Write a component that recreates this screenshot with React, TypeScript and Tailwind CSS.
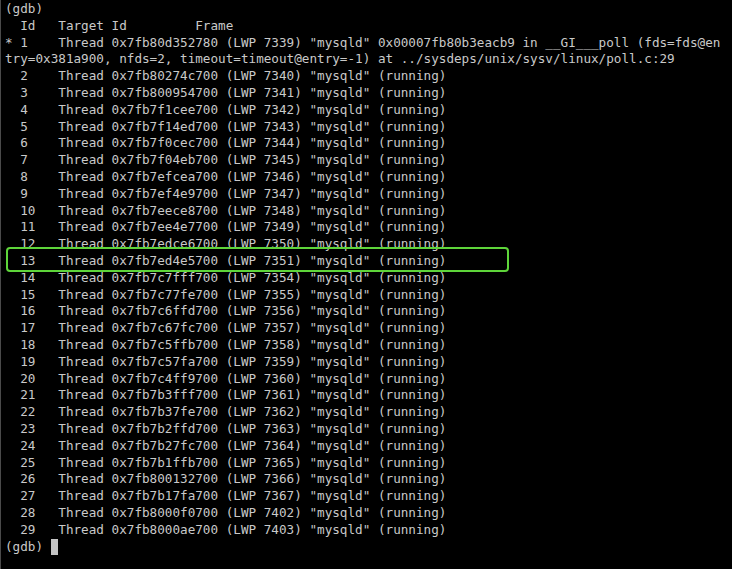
const threads: [number, string, number][] = [
  [2, "0x7fb80274c700", 7340],
  [3, "0x7fb800954700", 7341],
  [4, "0x7fb7f1cee700", 7342],
  [5, "0x7fb7f14ed700", 7343],
  [6, "0x7fb7f0cec700", 7344],
  [7, "0x7fb7f04eb700", 7345],
  [8, "0x7fb7efcea700", 7346],
  [9, "0x7fb7ef4e9700", 7347],
  [10, "0x7fb7eece8700", 7348],
  [11, "0x7fb7ee4e7700", 7349],
  [12, "0x7fb7edce6700", 7350],
  [13, "0x7fb7ed4e5700", 7351],
  [14, "0x7fb7c7fff700", 7354],
  [15, "0x7fb7c77fe700", 7355],
  [16, "0x7fb7c6ffd700", 7356],
  [17, "0x7fb7c67fc700", 7357],
  [18, "0x7fb7c5ffb700", 7358],
  [19, "0x7fb7c57fa700", 7359],
  [20, "0x7fb7c4ff9700", 7360],
  [21, "0x7fb7b3fff700", 7361],
  [22, "0x7fb7b37fe700", 7362],
  [23, "0x7fb7b2ffd700", 7363],
  [24, "0x7fb7b27fc700", 7364],
  [25, "0x7fb7b1ffb700", 7365],
  [26, "0x7fb800132700", 7366],
  [27, "0x7fb7b17fa700", 7367],
  [28, "0x7fb8000f0700", 7402],
  [29, "0x7fb8000ae700", 7403],
];

const App = () => {
  return (
    <div className="w-[732px] h-[569px] bg-black border-l border-[#4a4a4a] overflow-hidden">
      <div className="pl-[4px] pt-[1px] font-['DejaVu_Sans_Mono',monospace] text-[12.65px] leading-[16.8px] text-[#c9c9c9] whitespace-pre">
        <div>(gdb)</div>
        <div>  Id   Target Id         Frame </div>
        <div>* 1    Thread 0x7fb80d352780 (LWP 7339) "mysqld" 0x00007fb80b3eacb9 in __GI___poll (fds=fds@en</div>
        <div>try=0x381a900, nfds=2, timeout=timeout@entry=-1) at ../sysdeps/unix/sysv/linux/poll.c:29</div>
        {threads.map(([id, addr, lwp]) => (
          <div key={id} className="relative">
            {`  ${String(id).padEnd(5, " ")}Thread ${addr} (LWP ${lwp}) "mysqld" (running)`}
            {id === 13 && (
              <div className="absolute left-[1px] top-[-6px] w-[503px] h-[25px] border-2 border-[#5ed53a] rounded-[4px]" />
            )}
          </div>
        ))}
        <div className="flex items-center">
          <span>(gdb) </span>
          <span className="inline-block w-[7px] h-[16px] bg-[#c4c4c4]" />
        </div>
      </div>
    </div>
  );
};

export default App;
